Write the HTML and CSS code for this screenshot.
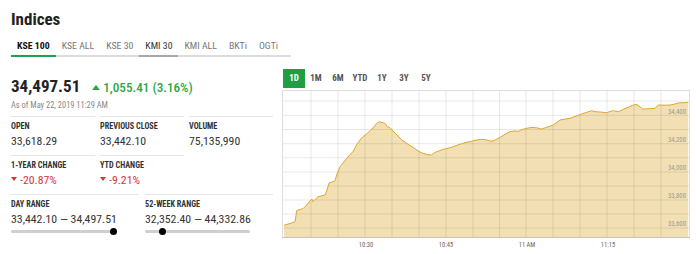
FILE: index.html
```html
<!DOCTYPE html>
<html lang="en">
<head>
  <meta charset="UTF-8">
  <meta name="viewport" content="width=device-width, initial-scale=1.0">
  <title>Indices</title>
  <link rel="stylesheet" href="styles.css">
</head>
<body>
  <div class="widget">
    <h1>Indices</h1>
    <div class="tabs">
      <span class="tab active">KSE 100</span>
      <span class="tab">KSE ALL</span>
      <span class="tab">KSE 30</span>
      <span class="tab hover">KMI 30</span>
      <span class="tab">KMI ALL</span>
      <span class="tab">BKTi</span>
      <span class="tab">OGTi</span>
    </div>

    <div class="main">
      <div class="summary">
        <div class="quote">
          <span class="price">34,497.51</span>
          <span class="change up"><span class="arrow-up"></span>1,055.41 (3.16%)</span>
        </div>
        <div class="asof">As of May 22, 2019 11:29 AM</div>

        <div class="stats three">
          <div class="stat"><div class="label">OPEN</div><div class="value">33,618.29</div></div>
          <div class="stat"><div class="label">PREVIOUS CLOSE</div><div class="value">33,442.10</div></div>
          <div class="stat"><div class="label">VOLUME</div><div class="value">75,135,990</div></div>
          <div class="stat"><div class="label">1-YEAR CHANGE</div><div class="value down"><span class="arrow-down"></span>-20.87%</div></div>
          <div class="stat"><div class="label">YTD CHANGE</div><div class="value down"><span class="arrow-down"></span>-9.21%</div></div>
        </div>

        <div class="stats two">
          <div class="stat">
            <div class="label">DAY RANGE</div>
            <div class="value">33,442.10 &mdash; 34,497.51</div>
            <div class="range"><span class="knob" style="left: 98%"></span></div>
          </div>
          <div class="stat">
            <div class="label">52-WEEK RANGE</div>
            <div class="value">32,352.40 &mdash; 44,332.86</div>
            <div class="range"><span class="knob" style="left: 17%"></span></div>
          </div>
        </div>
      </div>

      <div class="chart-box">
        <div class="periods">
          <span class="period active">1D</span>
          <span class="period">1M</span>
          <span class="period">6M</span>
          <span class="period">YTD</span>
          <span class="period">1Y</span>
          <span class="period">3Y</span>
          <span class="period">5Y</span>
        </div>
        <svg class="chart" width="408" height="160" viewBox="282 90 408 160">
          <rect x="282" y="90" width="408" height="148" fill="#fff"/>
          <!-- area -->
          <polygon class="area" points="284,225.3 290,223.5 295,221.7 296.7,210.7 300,209.5 303,208.7 306.7,205 309,202 312,199 313,201.7 315,199.5 318,196.7 321,196 325,195 327,190 329,183 332,182 335,180.7 337,174 340,166.7 343,163 346.7,158.5 350,154.5 353,151.7 357,144 360,140 363,136.7 366,134.5 370,130.7 373,128 376.7,123.3 379.3,121.7 382,122.5 385,123.3 387.3,126.7 390,127.7 393,131 396,134 399,137 401.7,140 405,142 409,145 413.3,147.3 416.7,150 420,152 423,153.3 427,154.5 431.7,155 434,153 436.7,151.7 440,150.5 443.3,149.3 447,148.5 451.7,147.3 455,146 459,144.5 463.3,143.3 466,142.3 470,141.7 475,140.3 481.7,139.3 486,139.8 490,141 493.3,141 496,139.5 500,137.3 504,135 507,133 510,131.7 514,131 518.3,131.3 522,129.5 526.7,128.3 531,127.5 536.7,127.7 539,128.5 541.7,129 546,127.5 550,126.2 553.3,125 556,123 560,120 565,119 570,118.3 575,116.5 581.7,114 586,112.5 591.7,110.7 595,111.7 600,112 606.7,112.7 610,111.5 613.3,110.7 618.3,111.7 622,110 625,108.5 628.3,107.3 632,105.5 636,104.3 639,106 642.7,109 648,108.8 655,108.3 658.3,105 664,105.2 670,105 675,104 680,102.7 684,102.8 688.3,102.3 688.3,237 284,237"/>
          <!-- grid -->
          <g class="grid">
            <line x1="283" y1="101" x2="689" y2="101"/>
            <line x1="283" y1="115.3" x2="689" y2="115.3"/>
            <line x1="283" y1="129.5" x2="689" y2="129.5"/>
            <line x1="283" y1="143.7" x2="689" y2="143.7"/>
            <line x1="283" y1="157.8" x2="689" y2="157.8"/>
            <line x1="283" y1="172" x2="689" y2="172"/>
            <line x1="283" y1="186" x2="689" y2="186"/>
            <line x1="283" y1="200" x2="689" y2="200"/>
            <line x1="283" y1="214" x2="689" y2="214"/>
            <line x1="283" y1="228" x2="689" y2="228"/>
            <line x1="311" y1="91" x2="311" y2="237"/>
            <line x1="338" y1="91" x2="338" y2="237"/>
            <line x1="365" y1="91" x2="365" y2="237"/>
            <line x1="392" y1="91" x2="392" y2="237"/>
            <line x1="419" y1="91" x2="419" y2="237"/>
            <line x1="446" y1="91" x2="446" y2="237"/>
            <line x1="473" y1="91" x2="473" y2="237"/>
            <line x1="499.5" y1="91" x2="499.5" y2="237"/>
            <line x1="526" y1="91" x2="526" y2="237"/>
            <line x1="553" y1="91" x2="553" y2="237"/>
            <line x1="580" y1="91" x2="580" y2="237"/>
            <line x1="607" y1="91" x2="607" y2="237"/>
            <line x1="634" y1="91" x2="634" y2="237"/>
            <line x1="661" y1="91" x2="661" y2="237"/>
          </g>
          <polyline class="line" points="284,225.3 290,223.5 295,221.7 296.7,210.7 300,209.5 303,208.7 306.7,205 309,202 312,199 313,201.7 315,199.5 318,196.7 321,196 325,195 327,190 329,183 332,182 335,180.7 337,174 340,166.7 343,163 346.7,158.5 350,154.5 353,151.7 357,144 360,140 363,136.7 366,134.5 370,130.7 373,128 376.7,123.3 379.3,121.7 382,122.5 385,123.3 387.3,126.7 390,127.7 393,131 396,134 399,137 401.7,140 405,142 409,145 413.3,147.3 416.7,150 420,152 423,153.3 427,154.5 431.7,155 434,153 436.7,151.7 440,150.5 443.3,149.3 447,148.5 451.7,147.3 455,146 459,144.5 463.3,143.3 466,142.3 470,141.7 475,140.3 481.7,139.3 486,139.8 490,141 493.3,141 496,139.5 500,137.3 504,135 507,133 510,131.7 514,131 518.3,131.3 522,129.5 526.7,128.3 531,127.5 536.7,127.7 539,128.5 541.7,129 546,127.5 550,126.2 553.3,125 556,123 560,120 565,119 570,118.3 575,116.5 581.7,114 586,112.5 591.7,110.7 595,111.7 600,112 606.7,112.7 610,111.5 613.3,110.7 618.3,111.7 622,110 625,108.5 628.3,107.3 632,105.5 636,104.3 639,106 642.7,109 648,108.8 655,108.3 658.3,105 664,105.2 670,105 675,104 680,102.7 684,102.8 688.3,102.3"/>
          <rect class="frame" x="282.5" y="90.5" width="407" height="147"/>
          <line class="axis" x1="282" y1="237.5" x2="690" y2="237.5"/>
          <g class="ylabels">
            <text x="686" y="114">34,400</text>
            <text x="686" y="142">34,200</text>
            <text x="686" y="170">34,000</text>
            <text x="686" y="198">33,800</text>
            <text x="686" y="226">33,600</text>
          </g>
          <g class="xlabels">
            <text x="366" y="246.5">10:30</text>
            <text x="446" y="246.5">10:45</text>
            <text x="527" y="246.5">11 AM</text>
            <text x="608" y="246.5">11:15</text>
          </g>
        </svg>
      </div>
    </div>
  </div>
</body>
</html>
```

FILE: styles.css
```css
body {
  margin: 0;
  font-family: 'Roboto', 'Liberation Sans', sans-serif;
  font-stretch: 85%;
  background-color: #fff;
  color: #222;
}

.widget {
  width: 696px;
  padding: 0 6px 0 11px;
  box-sizing: border-box;
}

h1 {
  margin: 0;
  padding-top: 8px;
  font-size: 17px;
  line-height: 22px;
  font-weight: 700;
  color: #222;
}

.tabs {
  display: flex;
  width: 280px;
  margin-top: 9px;
  border-bottom: 2px solid #dcdcdc;
}

.tab {
  flex: none;
  padding: 0 6px 3px;
  margin-bottom: -2px;
  font-size: 9.8px;
  line-height: 13px;
  color: #777;
  border-bottom: 2px solid transparent;
  white-space: nowrap;
}

.tab.active {
  color: #111;
  font-weight: 700;
  border-bottom-color: #1fa04a;
}

.tab.hover {
  color: #333;
  border-bottom-color: #a8a8a8;
}

.main {
  display: flex;
  gap: 9px;
}

.summary {
  width: 263px;
  padding-top: 19px;
}

.quote {
  display: flex;
  align-items: baseline;
  gap: 12px;
}

.price {
  font-size: 17px;
  font-weight: 700;
  line-height: 20px;
  color: #222;
}

.change {
  font-size: 13.2px;
  line-height: 20px;
  font-weight: 500;
}

.up {
  color: #2aa845;
}

.down {
  color: #d2373d;
}

.arrow-up {
  display: inline-block;
  width: 0;
  height: 0;
  margin-right: 3px;
  vertical-align: 2px;
  border-left: 4px solid transparent;
  border-right: 4px solid transparent;
  border-bottom: 5px solid #2aa845;
}

.arrow-down {
  display: inline-block;
  width: 0;
  height: 0;
  margin-right: 3px;
  vertical-align: 3px;
  border-left: 3.5px solid transparent;
  border-right: 3.5px solid transparent;
  border-top: 4px solid #d2373d;
}

.asof {
  font-size: 8.4px;
  line-height: 12px;
  color: #888;
  margin-top: 1px;
}

.stats {
  display: grid;
  column-gap: 5px;
}

.stats.three {
  grid-template-columns: 84px 84px 84px;
  margin-top: 5px;
}

.stats.two {
  grid-template-columns: 128px 128px;
  column-gap: 6px;
}

.stat {
  border-top: 1px solid #e6e6e6;
  padding-top: 3px;
  height: 35px;
}

.stats.two .stat {
  height: auto;
}

.label {
  font-size: 8.2px;
  line-height: 13px;
  font-weight: 700;
  color: #333;
}

.value {
  font-size: 11.8px;
  line-height: 16px;
  color: #333;
  white-space: nowrap;
}

.value.down {
  color: #d2373d;
}

.range {
  position: relative;
  width: 105px;
  height: 3px;
  margin-top: 3px;
  border-radius: 2px;
  background-color: #cfcfcf;
}

.knob {
  position: absolute;
  top: -2px;
  width: 7px;
  height: 7px;
  margin-left: -4px;
  border-radius: 50%;
  background-color: #000;
}

.chart-box {
  width: 408px;
  padding-top: 12px;
}

.periods {
  display: flex;
  margin-left: 1px;
  margin-bottom: 2px;
}

.period {
  width: 22px;
  height: 19px;
  line-height: 19px;
  text-align: center;
  font-size: 9px;
  font-weight: 700;
  color: #555;
}

.period.active {
  background-color: #1f9e44;
  color: #fff;
}

.chart {
  display: block;
}

.chart .area {
  fill: #f2e0b4;
}

.chart .grid line {
  stroke: rgba(0, 0, 0, 0.09);
  stroke-width: 1;
}

.chart .line {
  fill: none;
  stroke: #e0a532;
  stroke-width: 1;
}

.chart .frame {
  fill: none;
  stroke: #dedede;
}

.chart .axis {
  stroke: #c4c4c4;
}

.chart .ylabels text {
  font-size: 6.8px;
  fill: #a09a8c;
  text-anchor: end;
}

.chart .xlabels text {
  font-size: 6.5px;
  fill: #666;
  text-anchor: middle;
}
```
